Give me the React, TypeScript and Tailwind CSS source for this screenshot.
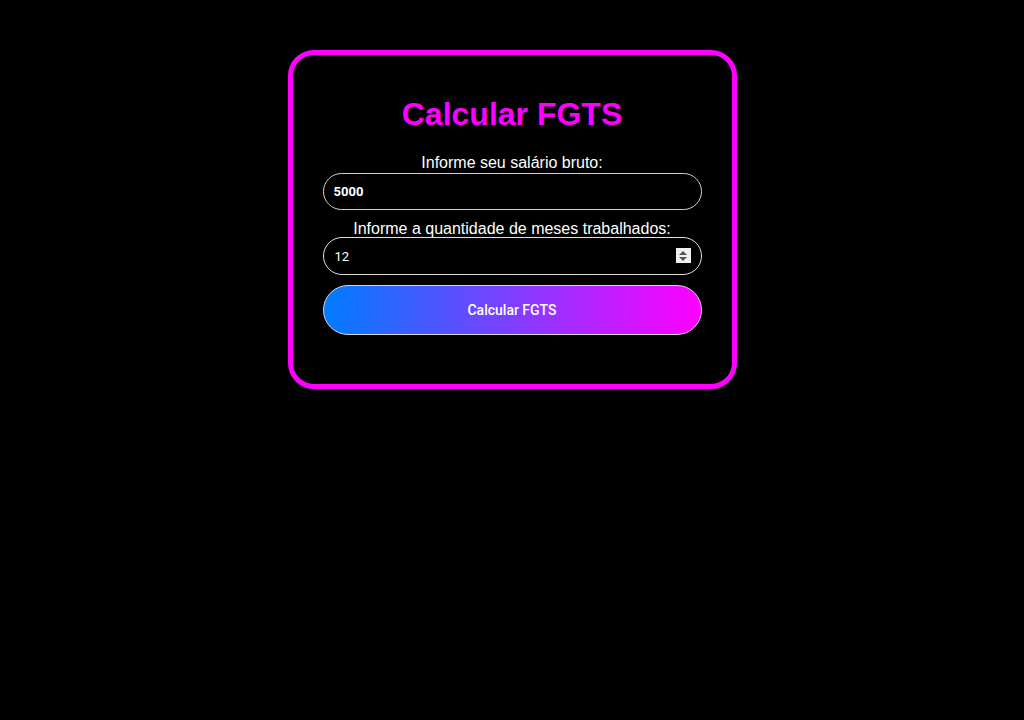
import { useState } from "react";

export default function App() {
  const [salario, setSalario] = useState("5000");
  const [meses, setMeses] = useState("12");

  return (
    <div className="min-h-screen bg-black pt-[50px] font-['Liberation_Sans',Arial,sans-serif]">
      <div className="mx-auto w-[449px] rounded-[26px] border-[5px] border-[#ff00ff] bg-black px-[30px] pt-[41px] pb-[49px]">
        <h1 className="mb-[21px] text-center text-[32px] font-bold leading-[37px] text-[#ff00ff]">
          Calcular FGTS
        </h1>

        <form className="flex flex-col" onSubmit={(e) => e.preventDefault()}>
          <label className="text-center text-[16px] leading-[18px] text-white">
            Informe seu salário bruto:
          </label>
          <input
            type="number"
            value={salario}
            onChange={(e) => setSalario(e.target.value)}
            className="mt-px h-[37px] w-full rounded-full border border-[#d0d0d0] bg-black px-[10px] font-['Roboto',sans-serif] text-[13px] font-bold text-white outline-none [appearance:textfield] [&::-webkit-inner-spin-button]:appearance-none"
          />

          <label className="mt-[10px] text-center text-[16px] leading-[18px] text-white">
            Informe a quantidade de meses trabalhados:
          </label>
          <div className="relative mt-[-1px]">
            <input
              type="number"
              value={meses}
              autoFocus
              onChange={(e) => setMeses(e.target.value)}
              className="h-[38px] w-full rounded-full border border-[#e0e0e0] bg-black px-[11px] font-['Roboto',sans-serif] text-[13px] text-white outline-none [appearance:textfield] [&::-webkit-inner-spin-button]:appearance-none"
            />
            <div className="pointer-events-none absolute right-[11px] top-[11px] flex h-[15px] w-[15px] flex-col items-center justify-center gap-[2px] bg-[#f0f0f0]">
              <svg width="8" height="4" viewBox="0 0 8 4">
                <path d="M0 4 L4 0 L8 4 Z" fill="#555" />
              </svg>
              <svg width="8" height="4" viewBox="0 0 8 4">
                <path d="M0 0 L4 4 L8 0 Z" fill="#555" />
              </svg>
            </div>
          </div>

          <button
            type="submit"
            className="mt-[10px] h-[50px] w-full rounded-full border border-[#d8d8d8] bg-[linear-gradient(to_right,#007bff,#ff00ff)] font-['Roboto',sans-serif] text-[14px] font-medium text-white"
          >
            Calcular FGTS
          </button>
        </form>
      </div>
    </div>
  );
}
